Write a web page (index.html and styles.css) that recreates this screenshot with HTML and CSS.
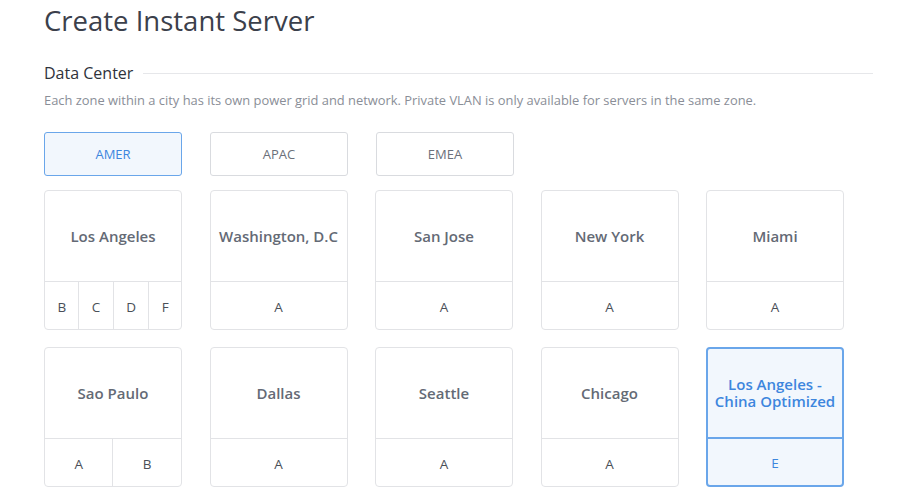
FILE: index.html
```html
<!DOCTYPE html>
<html lang="en">
<head>
    <meta charset="UTF-8">
    <meta name="viewport" content="width=device-width, initial-scale=1.0">
    <title>Create Instant Server</title>
    <link rel="stylesheet" href="styles.css">
</head>
<body>
    <div class="page">
        <h1 class="page-title">Create Instant Server</h1>

        <!-- Data Center -->
        <div class="section-head">
            <h2>Data Center</h2>
            <span class="section-line"></span>
        </div>
        <p class="section-desc">Each zone within a city has its own power grid and network. Private VLAN is only available for servers in the same zone.</p>

        <div class="regions">
            <button class="region active">AMER</button>
            <button class="region">APAC</button>
            <button class="region">EMEA</button>
        </div>

        <div class="cities">
            <div class="city">
                <div class="city-name">Los Angeles</div>
                <div class="zones"><span>B</span><span>C</span><span>D</span><span>F</span></div>
            </div>
            <div class="city">
                <div class="city-name">Washington, D.C</div>
                <div class="zones"><span>A</span></div>
            </div>
            <div class="city">
                <div class="city-name">San Jose</div>
                <div class="zones"><span>A</span></div>
            </div>
            <div class="city">
                <div class="city-name">New York</div>
                <div class="zones"><span>A</span></div>
            </div>
            <div class="city">
                <div class="city-name">Miami</div>
                <div class="zones"><span>A</span></div>
            </div>
            <div class="city">
                <div class="city-name">Sao Paulo</div>
                <div class="zones"><span>A</span><span>B</span></div>
            </div>
            <div class="city">
                <div class="city-name">Dallas</div>
                <div class="zones"><span>A</span></div>
            </div>
            <div class="city">
                <div class="city-name">Seattle</div>
                <div class="zones"><span>A</span></div>
            </div>
            <div class="city">
                <div class="city-name">Chicago</div>
                <div class="zones"><span>A</span></div>
            </div>
            <div class="city active">
                <div class="city-name">Los Angeles -<br>China Optimized</div>
                <div class="zones"><span>E</span></div>
            </div>
        </div>
    </div>
</body>
</html>
```

FILE: styles.css
```css
/* General Styles */
body {
    font-family: "Open Sans", Arial, sans-serif;
    margin: 0;
    background: #fff;
    color: #3b404b;
}

.page {
    padding: 0 27px 0 44px;
}

.page-title {
    font-size: 27.5px;
    font-weight: 400;
    margin: 0;
    padding-top: 3px;
    line-height: 36px;
    color: #3b404b;
}

.section-head {
    display: flex;
    align-items: center;
    margin-top: 23px;
}

.section-head h2 {
    font-size: 16px;
    font-weight: 400;
    margin: 0;
    line-height: 22px;
    color: #2f333b;
}

.section-line {
    flex: 1;
    height: 1px;
    background: #e6e7ea;
    margin-left: 10px;
}

.section-desc {
    font-size: 12.9px;
    color: #8a8e97;
    margin: 6px 0 0;
    line-height: 20px;
}

.regions {
    display: flex;
    gap: 28px;
    margin-top: 22px;
}

.region {
    width: 138px;
    height: 44px;
    border: 1px solid #d9dbdf;
    border-radius: 3px;
    background: #fff;
    font-family: inherit;
    font-size: 13px;
    color: #6b707a;
    cursor: pointer;
}

.region.active {
    border-color: #6aa6ea;
    background: #f2f7fd;
    color: #3d86dd;
}

.cities {
    display: grid;
    grid-template-columns: repeat(5, 138px);
    column-gap: 27.5px;
    row-gap: 17px;
    margin-top: 14px;
}

.city {
    height: 140px;
    border: 1px solid #e2e3e6;
    border-radius: 4px;
    display: flex;
    flex-direction: column;
    box-sizing: border-box;
    background: #fff;
    cursor: pointer;
}

.city-name {
    flex: 1;
    display: flex;
    align-items: center;
    justify-content: center;
    text-align: center;
    font-size: 15px;
    font-weight: 600;
    line-height: 17px;
    color: #646a75;
    padding: 0 4px;
}

.zones {
    height: 47px;
    display: flex;
    border-top: 1px solid #e2e3e6;
}

.zones span {
    flex: 1 1 auto;
    display: flex;
    align-items: center;
    justify-content: center;
    font-size: 13.5px;
    color: #4a4f58;
    padding-top: 2px;
}

.zones span + span {
    border-left: 1px solid #e2e3e6;
}

.city.active {
    border: 2px solid #6aa6ea;
    background: #f2f7fd;
}

.city.active .city-name {
    color: #3d86dd;
}

.city.active .zones {
    border-top: 2px solid #6aa6ea;
    height: 46px;
}

.city.active .zones span {
    color: #3d86dd;
}
```
